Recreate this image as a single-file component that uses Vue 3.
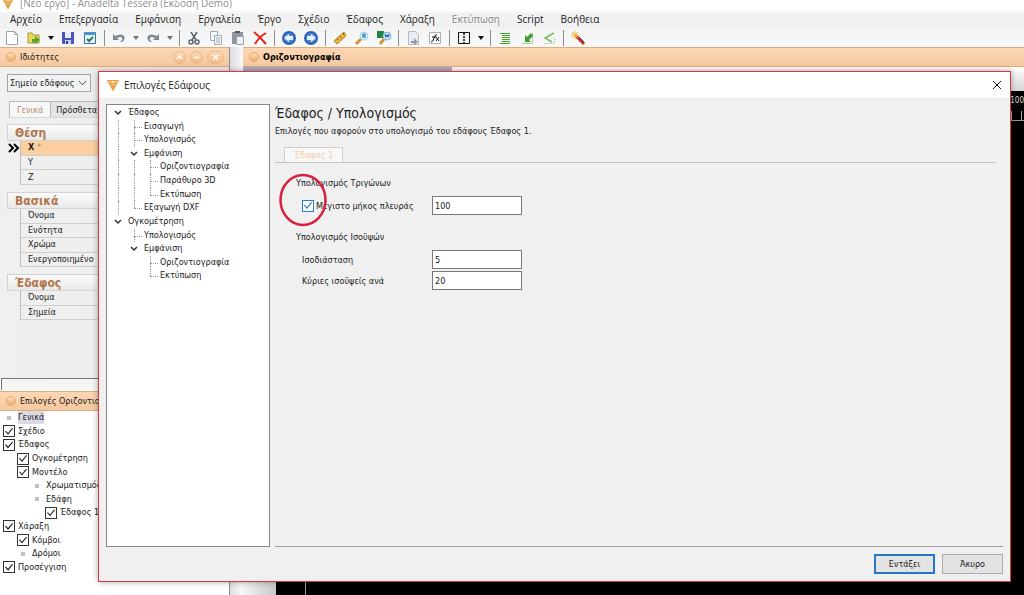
<script setup>
import { ref } from 'vue'

const menus = ['Αρχείο', 'Επεξεργασία', 'Εμφάνιση', 'Εργαλεία', 'Έργο', 'Σχέδιο', 'Έδαφος', 'Χάραξη', 'Εκτύπωση', 'Script', 'Βοήθεια']

const tools = [
  'new', 'open', 'arrow', 'save', 'form', 'sep', 'undo', 'arrow2', 'redo', 'arrow2', 'sep',
  'cut', 'copy', 'paste', 'delete', 'sep', 'back', 'forward', 'sep', 'ruler', 'find', 'replace', 'sep',
  'page', 'function', 'sep', 'columns', 'arrow', 'sep', 'list', 'import', 'branch', 'sep', 'wand'
]

const groups = [
  { title: 'Θέση', size: 'three', rows: ['X', 'Y', 'Z'] },
  { title: 'Βασικά', size: 'four', rows: ['Όνομα', 'Ενότητα', 'Χρώμα', 'Ενεργοποιημένο'] },
  { title: 'Έδαφος', size: 'two', rows: ['Όνομα', 'Σημεία'] }
]

const layers = ref([
  { label: 'Γενικά', level: 0, selected: true },
  { label: 'Σχέδιο', level: 0, box: true, on: true },
  { label: 'Έδαφος', level: 0, box: true, on: true },
  { label: 'Ογκομέτρηση', level: 1, box: true, on: true },
  { label: 'Μοντέλο', level: 1, box: true, on: true },
  { label: 'Χρωματισμός', level: 2 },
  { label: 'Εδάφη', level: 2 },
  { label: 'Έδαφος 1', level: 3, box: true, on: true },
  { label: 'Χάραξη', level: 0, box: true, on: true },
  { label: 'Κόμβοι', level: 1, box: true, on: true },
  { label: 'Δρόμοι', level: 1 },
  { label: 'Προσέγγιση', level: 0, box: true, on: true }
])

// Guide cells: c = chevron, v = vertical line, t = tee, l = corner, b = blank
const options = [
  { label: 'Έδαφος', cells: 'c' },
  { label: 'Εισαγωγή', cells: 'vt' },
  { label: 'Υπολογισμός', cells: 'vt' },
  { label: 'Εμφάνιση', cells: 'vc' },
  { label: 'Οριζοντιογραφία', cells: 'vvt' },
  { label: 'Παράθυρο 3D', cells: 'vvt' },
  { label: 'Εκτύπωση', cells: 'vvl' },
  { label: 'Εξαγωγή DXF', cells: 'vl' },
  { label: 'Ογκομέτρηση', cells: 'c' },
  { label: 'Υπολογισμός', cells: 'bt' },
  { label: 'Εμφάνιση', cells: 'bc' },
  { label: 'Οριζοντιογραφία', cells: 'bbt' },
  { label: 'Εκτύπωση', cells: 'bbl' }
]

const limitSide = ref(true)
const maxSide = ref('100')
const interval = ref('5')
const major = ref('20')
</script>

<template>
  <div class="app">
    <header class="titlebar">
      <svg class="brand" viewBox="0 0 14 14"><path d="M1 2h12L7 13z M4 2l3 8 3-8 M2 5h10" fill="none" stroke="#e8a040" stroke-width="1.5" /></svg>
      <span>[Νέο έργο] - Anadelta Tessera (Εκδοση Demo)</span>
    </header>
    <nav class="menubar">
      <button v-for="m in menus" :key="m" type="button" :disabled="m === 'Εκτύπωση'">{{ m }}</button>
    </nav>
    <div class="toolbar">
      <template v-for="(t, i) in tools" :key="i">
        <span v-if="t === 'sep'" class="sep"></span>
        <button v-else type="button" :class="{ narrow: t.startsWith('arrow') }" :aria-label="t">
          <svg v-if="t.startsWith('arrow')" width="8" height="16" viewBox="0 0 8 16"><path d="M1 6h6L4 10z" :fill="t === 'arrow' ? '#111' : '#6b7480'" /></svg>
          <svg v-else width="16" height="16" viewBox="0 0 16 16">
            <g v-if="t === 'new'"><path d="M2.500 1.500h8l3 3v10h-11z" fill="#fff" stroke="#9aa4b0" /><path d="M10.500 1.500v3h3" fill="none" stroke="#9aa4b0" /></g>
            <g v-else-if="t === 'open'"><path d="M2 13V3h4l1 2h6v8z" fill="#e9d95a" stroke="#a39632" /><path d="M6 13V9h3V6l5 4-5 4v-2z" fill="#5aa52c" /></g>
            <g v-else-if="t === 'save'"><path d="M2 2h12v12H3l-1-1z" fill="#4a57b8" /><path d="M5 2h6v6H5z" fill="#e8ebff" /><path d="M5 10h6v4H5z" fill="#c9cef0" /><path d="M6 11h2v3H6z" fill="#35408c" /></g>
            <g v-else-if="t === 'form'"><path d="M2.500 2.500h11v11h-11z" fill="#e9f5fb" stroke="#3d6f9d" /><path d="M2 2h12v3H2z" fill="#4b95c9" /><path d="M5 9l2 2 4-4" fill="none" stroke="#1f7d54" stroke-width="2" /></g>
            <g v-else-if="t === 'undo'"><path d="M2 4v6h6L6 8q4-2 5 0t-2 4h2q4-3 2-6T4 6z" fill="#7b8792" /></g>
            <g v-else-if="t === 'redo'"><path d="M14 4v6H8l2-2Q6 6 5 8t2 4H5Q1 9 3 6t9 0z" fill="#7b8792" /></g>
            <g v-else-if="t === 'cut'" fill="none" stroke="#5c6670" stroke-width="1.5"><path d="M5 2l5 8M11 2L6 10" /><circle cx="5" cy="12" r="2" /><circle cx="11" cy="12" r="2" /></g>
            <g v-else-if="t === 'copy'" fill="#f4f7fa" stroke="#a0aab5"><path d="M2.500 1.500h7v9h-7z" /><path d="M6.500 5.500h7v9h-7z" /><path d="M8 8h4M8 10h4M8 12h4" /></g>
            <g v-else-if="t === 'paste'"><path d="M2 2h11v12H2z" fill="#8e959c" /><path d="M5 1h5v2H5z" fill="#4e565e" /><path d="M6.500 6.500h7v8h-7z" fill="#eef1f4" stroke="#97a0a8" /></g>
            <path v-else-if="t === 'delete'" d="M2 2q6 5 12 12M14 3Q7 7 3 14" fill="none" stroke="#e2261e" stroke-width="2" />
            <g v-else-if="t === 'back'"><circle cx="8" cy="8" r="7" fill="#2d62b4" /><circle cx="8" cy="8" r="5" fill="#4c86cf" /><path d="M3 8l5-4v2h4v4H8v2z" fill="#e6f3ff" /></g>
            <g v-else-if="t === 'forward'"><circle cx="8" cy="8" r="7" fill="#2d62b4" /><circle cx="8" cy="8" r="5" fill="#4c86cf" /><path d="M13 8L8 4v2H4v4h4v2z" fill="#e6f3ff" /></g>
            <g v-else-if="t === 'ruler'"><path d="M2 11L12 2l2 4-9 8z" fill="#eab63c" stroke="#b98423" /><path d="M5 8l1 2M8 6l1 2M11 3l1 2" stroke="#946515" /></g>
            <g v-else-if="t === 'find'"><path d="M2 14l5-5" stroke="#d59433" stroke-width="3" /><circle cx="10" cy="6" r="4" fill="#d6f0fb" stroke="#9fd3ea" /><path d="M9 8V4h2v4M9 6h2" stroke="#2a6ca4" fill="none" /></g>
            <g v-else-if="t === 'replace'"><path d="M1 1h7v7H1z" fill="#23823f" /><path d="M4 14l4-5" stroke="#d59433" stroke-width="3" /><circle cx="11" cy="6" r="4" fill="#bde0f5" stroke="#7fb9dc" /><path d="M9 4l1 3 1-2 1 2 1-3" stroke="#1c5797" fill="none" /></g>
            <g v-else-if="t === 'page'"><path d="M3.500 1.500h7l3 3v10h-10z" fill="#e9edf1" stroke="#b4bbc3" /><path d="M6 11h3V8l4 4-4 3v-2H6z" fill="#8b98a8" /></g>
            <g v-else-if="t === 'function'"><path d="M2.500 2.500h11v11h-11z" fill="#fafafa" stroke="#a8b0b8" /><path d="M4 12q2 0 3-4t3-3M5 7h4M9 7l3 4M12 7l-3 4" fill="none" stroke="#111" /></g>
            <g v-else-if="t === 'columns'" fill="none" stroke="#111"><path d="M2.500 2.500h11v11h-11z" /><path d="M8 3v10" stroke-width="1.500" stroke-dasharray="2 1" /></g>
            <path v-else-if="t === 'list'" d="M3 3.500h10M5 5.500h8M5 7.500h8M5 9.500h8M5 11.500h8M3 13.500h10" stroke="#43a826" fill="none" />
            <g v-else-if="t === 'import'"><path d="M3 13.500h10.500V3" fill="none" stroke="#a8cf9a" /><path d="M12 3L8 7 6 5v7h6l-2-2 4-4z" fill="#3f9d2b" /></g>
            <g v-else-if="t === 'branch'" fill="none"><path d="M13 3L4 8l7 4" stroke="#7bbc5b" stroke-width="1.500" /><path d="M3 13.500h10.500V8" stroke="#c3d8b8" /></g>
            <g v-else><path d="M6 6l8 8" stroke="#c63732" stroke-width="3" /><path d="M9 7l5 5" stroke="#632a2a" /><path d="M5 1v8M1 5h8M2 2l6 6M8 2L2 8" stroke="#eeb83b" /></g>
          </svg>
        </button>
      </template>
    </div>

    <div class="work">
      <aside class="side">
        <div class="panel-head">
          <span class="dot"></span><span class="grow">Ιδιότητες</span>
          <button type="button" class="dot" aria-label="Σύμπτυξη"><svg width="7" height="7" viewBox="0 0 7 7"><path d="M1 5l2.500-3L6 5" fill="none" stroke="#fff" stroke-width="1.500" /></svg></button>
          <button type="button" class="dot" aria-label="Ελαχιστοποίηση"><svg width="7" height="7" viewBox="0 0 7 7"><path d="M1 3.500h5" stroke="#fff" stroke-width="1.500" /></svg></button>
          <button type="button" class="dot wide" aria-label="Κλείσιμο"><svg width="7" height="7" viewBox="0 0 7 7"><path d="M1 1l5 5M6 1L1 6" stroke="#fff" stroke-width="1.500" /></svg></button>
        </div>
        <div class="props">
          <div class="kind">
            <select aria-label="Τύπος"><option>Σημείο εδάφους</option></select>
            <svg width="9" height="8" viewBox="0 0 9 8"><path d="M1 2l3.500 4L8 2" fill="none" stroke="#555" /></svg>
          </div>
          <div class="tabs">
            <button type="button" class="active">Γενικά</button>
            <button type="button">Πρόσθετα</button>
          </div>
          <section v-for="g in groups" :key="g.title" class="group">
            <h3>{{ g.title }}</h3>
            <ul :class="g.size">
              <li v-for="r in g.rows" :key="r" :class="{ current: r === 'X' }">
                <svg v-if="r === 'X'" class="marker" viewBox="0 0 12 10"><path d="M1 1l4 4-4 4M6 1l4 4-4 4" fill="none" stroke="#000" stroke-width="2" /></svg>
                <span>{{ r }}</span><small v-if="r === 'X'">*</small>
              </li>
            </ul>
          </section>
        </div>
        <div class="hint"></div>
        <div class="panel-head lower"><span class="dot"></span><span class="grow">Επιλογές Οριζοντιογραφίας</span></div>
        <ul class="layers">
          <li v-for="(l, i) in layers" :key="i" :style="{ paddingLeft: 3 + l.level * 14 + 'px' }">
            <label v-if="l.box"><input v-model="l.on" type="checkbox" />{{ l.label }}</label>
            <span v-else class="leaf" :class="{ selected: l.selected }"><i></i><b>{{ l.label }}</b></span>
          </li>
        </ul>
      </aside>
      <div class="splitter"></div>
      <main class="drawing">
        <div class="panel-head strong"><span class="dot"></span><span>Οριζοντιογραφία</span></div>
        <div class="view-bar"><span></span></div>
        <div class="view">
          <div class="gutter"></div>
          <div class="canvas"><div class="ruler"><span>100</span><div class="ticks"></div></div><div class="axis"></div></div>
        </div>
      </main>
    </div>

    <div class="dialog" role="dialog" aria-labelledby="dialog-title">
      <div class="dialog-head">
        <svg class="brand" viewBox="0 0 14 14"><path d="M1 2h12L7 13z M4 2l3 8 3-8 M2 5h10" fill="none" stroke="#e8a040" stroke-width="1.500" /></svg>
        <span id="dialog-title">Επιλογές Εδάφους</span>
        <button type="button" aria-label="Κλείσιμο"><svg width="10" height="10" viewBox="0 0 10 10"><path d="M1 1l8 8M9 1L1 9" stroke="#111" /></svg></button>
      </div>
      <div class="dialog-body">
        <div class="options">
          <ul>
            <li v-for="(o, i) in options" :key="i">
              <span v-for="(c, k) in o.cells" :key="k" class="cell" :class="'cell-' + c">
                <svg v-if="c === 'c'" width="8" height="8" viewBox="0 0 8 8"><path d="M1 2l3 3 3-3" fill="none" stroke="#333" stroke-width="1.500" /></svg>
              </span>
              <span class="name">{{ o.label }}</span>
            </li>
          </ul>
        </div>
        <div class="page">
          <h1>Έδαφος / Υπολογισμός</h1>
          <p>Επιλογές που αφορούν στο υπολογισμό του εδάφους Έδαφος 1.</p>
          <div class="page-tabs"><button type="button">Έδαφος 1</button></div>
          <div class="fields">
            <h2>Υπολογισμός Τριγώνων</h2>
            <div class="field check">
              <label for="limit"><input id="limit" v-model="limitSide" type="checkbox" />Μέγιστο μήκος πλευράς</label>
              <input v-model="maxSide" type="text" aria-label="Μέγιστο μήκος πλευράς" />
              <svg class="ring" viewBox="0 0 48 54"><ellipse cx="24" cy="27" rx="22.500" ry="25" fill="none" stroke="#d9203c" stroke-width="2.500" /></svg>
            </div>
            <h2 class="second">Υπολογισμός Ισοϋψών</h2>
            <div class="field"><label for="interval">Ισοδιάσταση</label><input id="interval" v-model="interval" type="text" /></div>
            <div class="field"><label for="major">Κύριες ισοϋψείς ανά</label><input id="major" v-model="major" type="text" /></div>
          </div>
        </div>
      </div>
      <div class="dialog-foot">
        <button type="button" class="primary">Εντάξει</button>
        <button type="button">Άκυρο</button>
      </div>
    </div>
  </div>
</template>

<style>
body { margin: 0; overflow: hidden; }
</style>

<style scoped>
* { box-sizing: border-box; }
.app {
  position: relative; display: flex; flex-direction: column; height: 100vh; overflow: hidden;
  background: #f0f0f0; color: #1c1c1c; font: 9px/14px "DejaVu Sans Condensed", "Noto Sans", sans-serif;
}
button, input, select { font: inherit; color: inherit; margin: 0; padding: 0; border: 0; background: none; border-radius: 0; }
ul { list-style: none; margin: 0; padding: 0; }
h1, h2, h3, p { margin: 0; font-weight: normal; }
.brand { width: 12px; height: 14px; flex: none; }
.titlebar {
  display: flex; align-items: flex-end; gap: 6px; height: 10px; padding-left: 2px; flex: none;
  overflow: hidden; background: #fff; color: #909090; font: 10px/14px "Open Sans", sans-serif;
}
.menubar { display: flex; gap: 17px; height: 18px; padding-left: 10px; flex: none; background: linear-gradient(#fff, #f1f1f1 4px); font: 10px/18px "Open Sans", sans-serif; }
.menubar button:disabled { color: #8c8c8c; }
.toolbar { display: flex; align-items: center; height: 19px; padding-left: 1px; flex: none; background: linear-gradient(#f3f3f3, #f7f9fb); }
.toolbar button { width: 22px; height: 16px; display: flex; justify-content: center; flex: none; }
.toolbar .narrow { width: 12px; }
.sep { width: 7px; height: 16px; flex: none; background: linear-gradient(#8e8e8e, #8e8e8e) center / 1px 100% no-repeat; }
.work { display: flex; flex: 1; min-height: 0; }
.side { width: 230px; flex: none; display: flex; flex-direction: column; background: #fff; border-right: 1px solid #8f8f8f; overflow: hidden; }
.panel-head {
  display: flex; align-items: center; gap: 4px; height: 20px; padding: 0 5px 0 6px; flex: none; white-space: nowrap;
  background: linear-gradient(#fcd7b5, #f5c99f); border-top: 1px solid #e0ab78; border-bottom: 1px solid #e0ab78;
}
.panel-head .grow { flex: 1; }
.dot { width: 10px; height: 10px; flex: none; border-radius: 50%; background: linear-gradient(#fbdcba, #f2ac68); border: 1px solid #e2ab74; }
button.dot { width: 13px; height: 13px; display: grid; place-items: center; background: linear-gradient(#fbd9b8, #f3b983); border-color: #eab889; }
button.wide { width: 17px; border-radius: 6px; }
.strong { font-weight: bold; color: #000; }
.props { flex: 1; min-height: 0; padding: 7px 0 0 7px; background: linear-gradient(90deg, #f0f0f0, #ebebed); }
.kind { position: relative; width: 84px; height: 18px; border: 1px solid #a3a3a3; background: #f3f3f3; }
.kind select { display: block; width: 100%; height: 16px; padding: 0 0 0 2px; appearance: none; line-height: 16px; }
.kind svg { position: absolute; right: 3px; top: 4px; pointer-events: none; }
.tabs { display: flex; height: 17px; margin: 9px 0 6px 2px; border-bottom: 1px solid #d8d8d8; }
.tabs button { padding: 0 5px; border: 1px solid #b9b9b9; border-bottom: 0; background: #e4e4e4; }
.tabs .active { padding: 0 7px; background: #f7f7f7; color: #b08e6e; border-right: 0; }
.group { margin-bottom: 7px; }
.group h3 {
  height: 17px; padding-left: 7px; border: 1px solid #d3d3d3; background: linear-gradient(#fbfbfb, #e9e9e9);
  color: #b1774d; font: bold 12px/17px "DejaVu Sans Condensed", "Noto Sans", sans-serif;
}
.group ul { display: grid; grid-auto-rows: 1fr; margin-left: 13px; border-left: 1px solid #bdbdbd; }
.three { height: 44px; }
.four { height: 58px; }
.two { height: 29px; }
.group li { position: relative; display: flex; align-items: center; padding-left: 7px; border-bottom: 1px solid #cfcfcf; line-height: 13px; }
.current { background: #fbcf9f; font-weight: bold; }
.current small { margin-left: 3px; color: #b58657; font-weight: normal; font-size: 9px; }
.marker { position: absolute; left: -13px; top: 2px; width: 12px; height: 10px; }
.hint { height: 12px; flex: none; border: 1px solid #777; border-bottom: 0; background: #f5f5f5; margin-left: 1px; }
.lower { margin-top: 1px; }
.layers { display: grid; grid-auto-rows: 1fr; height: 163px; flex: none; margin-bottom: 21px; }
.layers li { display: flex; align-items: center; white-space: nowrap; line-height: 13px; }
.layers label { display: flex; align-items: center; gap: 3px; }
input[type="checkbox"] { appearance: none; width: 12px; height: 12px; flex: none; border: 1px solid #333; background: #fff; display: grid; place-items: center; }
input[type="checkbox"]:checked::before {
  content: ""; width: 8px; height: 7px; background: #222;
  clip-path: polygon(0 50%, 10% 40%, 38% 74%, 90% 0, 100% 10%, 38% 100%);
}
.leaf { display: flex; align-items: center; gap: 7px; padding-left: 4px; }
.leaf i { width: 4px; height: 4px; background: #c0c0c0; }
.leaf b { font-weight: normal; }
.selected b { background: #dcdae4; }
.splitter { width: 13px; flex: none; background: linear-gradient(90deg, #dedee2, #fafafa); }
.drawing { flex: 1; min-width: 0; display: flex; flex-direction: column; background: #eceaf0; }
.view-bar { height: 24px; flex: none; background: linear-gradient(#fff, #d6d6d6); }
.view-bar span { display: block; width: 209px; height: 5px; background: #a9aec8; }
.view { display: flex; flex: 1; min-height: 0; }
.gutter { width: 33px; background: linear-gradient(90deg, #f3f3f3, #c9c9c9); }
.canvas { flex: 1; background: #000; }
.ruler { height: 30px; border-bottom: 1px solid #999; color: #ddd; text-align: right; font-size: 8px; line-height: 20px; }
.ruler span { display: block; height: 20px; }
.ticks { height: 9px; background: repeating-linear-gradient(270deg, transparent 0 2px, #aaa 2px 3px, transparent 3px 10px); }
.axis { width: 30px; height: calc(100% - 30px); border-right: 1px solid #999; }

.dialog {
  position: absolute; left: 98px; right: 13px; top: 71px; bottom: 13px; display: flex; flex-direction: column;
  border: 1px solid #d8383e; background: #f0f0f0; box-shadow: 0 0 6px rgba(0, 0, 0, 0.35);
}
.dialog-head { display: flex; align-items: center; gap: 5px; height: 26px; padding: 0 7px 0 8px; flex: none; background: #fff; font: 10px/16px "Open Sans", sans-serif; }
.dialog-head span { flex: 1; }
.dialog-head button { width: 12px; height: 12px; display: grid; place-items: center; }
.dialog-body { display: flex; flex: 1; min-height: 0; gap: 5px; padding: 6px 7px 0 7px; }
.options { width: 164px; flex: none; border: 1px solid #828790; background: #fff; padding: 1px 0 0 3px; }
.options ul { display: grid; grid-auto-rows: 1fr; height: 177px; }
.options li { display: flex; align-items: stretch; }
.cell { width: 16px; position: relative; display: grid; place-items: center; flex: none; }
.cell-v::before, .cell-t::before, .cell-l::before { content: ""; position: absolute; left: 8px; top: 0; bottom: 0; border-left: 1px dotted #999; }
.cell-l::before { bottom: 50%; }
.cell-t::after, .cell-l::after { content: ""; position: absolute; left: 8px; right: 0; top: 7px; border-top: 1px dotted #999; }
.name { padding-left: 2px; line-height: 13px; white-space: nowrap; }
.page { flex: 1; min-width: 0; border-bottom: 1px solid #a0a0a0; }
.page h1 { font: 14px/18px "DejaVu Sans Condensed", "Noto Sans", sans-serif; }
.page p { line-height: 18px; }
.page-tabs { display: flex; align-items: flex-end; height: 23px; margin-right: 7px; padding-left: 9px; border-bottom: 1px solid #c4c4c4; }
.page-tabs button { height: 15px; padding: 0 9px; border: 1px solid #cfcfcf; border-bottom: 0; background: #f8f8f8; color: #f5cba8; line-height: 14px; }
.fields { padding: 13px 0 0 21px; }
.fields h2 { font: inherit; line-height: 14px; }
.fields .second { margin-top: 14px; margin-bottom: 5px; }
.field { position: relative; display: flex; align-items: center; height: 21px; padding-left: 6px; }
.field label { width: 130px; flex: none; display: flex; align-items: center; gap: 2px; white-space: nowrap; }
.field input[type="text"] { width: 90px; height: 19px; padding: 0 2px; border: 1px solid #7a7a7a; background: #fff; }
.check { margin-top: 5px; }
.check input[type="checkbox"] { border-color: #2a7fc9; }
.check input[type="checkbox"]:checked::before { background: #1f74c0; }
.ring { position: absolute; left: -17px; top: -22px; width: 48px; height: 54px; pointer-events: none; }
.dialog-foot { display: flex; justify-content: flex-end; align-items: center; gap: 7px; height: 34px; padding-right: 7px; flex: none; }
.dialog-foot button { width: 61px; height: 20px; border: 1px solid #adadad; background: #e3e3e3; }
.dialog-foot .primary { border: 2px solid #2478c8; }
</style>
